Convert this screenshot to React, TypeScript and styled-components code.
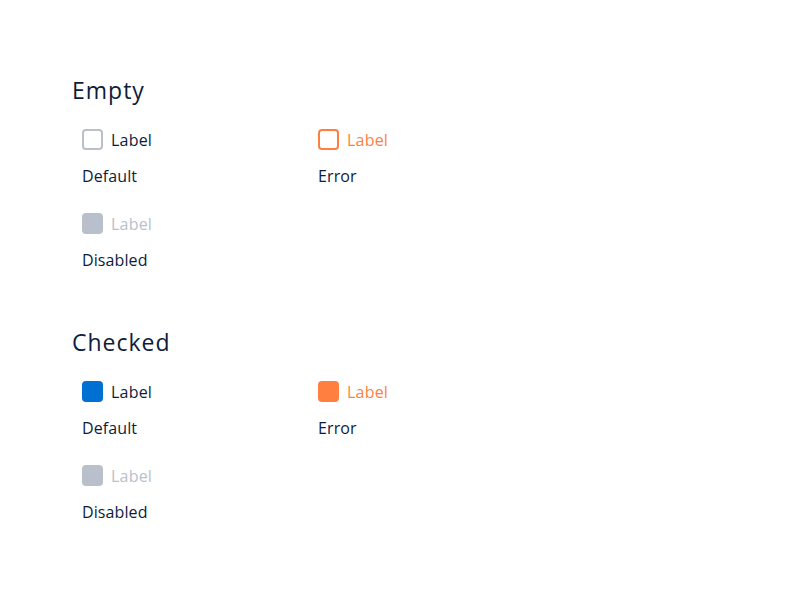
import React from "react";
import styled, { createGlobalStyle } from "styled-components";

const GlobalStyle = createGlobalStyle`
  html, body { margin: 0; padding: 0; background: #ffffff; }
  body { font-family: "Open Sans", Lato, sans-serif; color: #0d1c3d; }
`;

const Page = styled.div`
  padding: 76px 0 0 72px;
  display: flex;
  flex-direction: column;
  gap: 58px;
`;

const Section = styled.section`
  display: flex;
  flex-direction: column;
  gap: 25px;
`;

const Heading = styled.h2`
  margin: 0;
  font-size: 23px;
  line-height: 28px;
  font-weight: 400;
  letter-spacing: 1px;
  color: #0d1c3d;
`;

const Grid = styled.div`
  display: grid;
  grid-template-columns: 236px 236px;
  row-gap: 27px;
  padding-left: 10px;
`;

const Item = styled.div`
  display: flex;
  flex-direction: column;
  gap: 16px;
`;

type Variant = "default" | "error" | "disabled";

const Row = styled.label`
  display: flex;
  align-items: center;
  gap: 8px;
  height: 21px;
`;

const Box = styled.span<{ $variant: Variant; $checked: boolean }>`
  box-sizing: border-box;
  width: 21px;
  height: 21px;
  border-radius: 4px;
  border: 2px solid
    ${(p) =>
      p.$variant === "error" ? "#ff7f41" : p.$variant === "disabled" ? "#b9c0cb" : p.$checked ? "#0070d2" : "#b9c0cb"};
  background: ${(p) =>
    p.$variant === "disabled"
      ? "#b9c0cb"
      : p.$checked
      ? p.$variant === "error"
        ? "#ff7f41"
        : "#0070d2"
      : "#ffffff"};
`;

const LabelText = styled.span<{ $variant: Variant }>`
  font-size: 16px;
  line-height: 20px;
  letter-spacing: 0.2px;
  color: ${(p) => (p.$variant === "error" ? "#ff7f41" : p.$variant === "disabled" ? "#b9c0cb" : "#0d1c3d")};
`;

const Caption = styled.div`
  font-size: 16px;
  line-height: 20px;
  letter-spacing: 0.1px;
  color: #0d1c3d;
`;

const variants: { v: Variant; caption: string }[] = [
  { v: "default", caption: "Default" },
  { v: "error", caption: "Error" },
  { v: "disabled", caption: "Disabled" },
];

function Block({ title, checked }: { title: string; checked: boolean }) {
  return (
    <Section>
      <Heading>{title}</Heading>
      <Grid>
        {variants.map(({ v, caption }) => (
          <Item key={v}>
            <Row>
              <Box $variant={v} $checked={checked} />
              <LabelText $variant={v}>Label</LabelText>
            </Row>
            <Caption>{caption}</Caption>
          </Item>
        ))}
      </Grid>
    </Section>
  );
}

export default function App() {
  return (
    <>
      <GlobalStyle />
      <Page>
        <Block title="Empty" checked={false} />
        <Block title="Checked" checked={true} />
      </Page>
    </>
  );
}
